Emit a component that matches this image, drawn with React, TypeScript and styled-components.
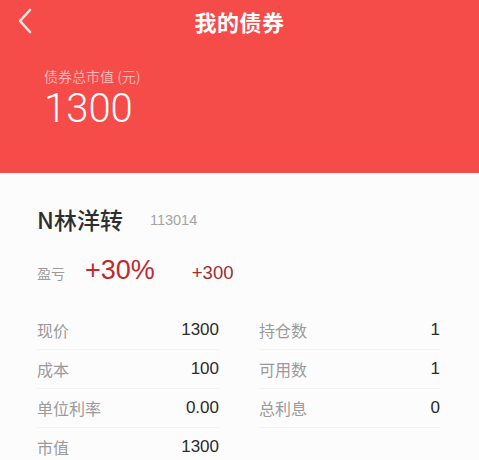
import styled, { createGlobalStyle } from 'styled-components'

const GlobalStyle = createGlobalStyle`
  html, body {
    margin: 0;
    padding: 0;
    background: #fdfcfd;
  }
  body {
    font-family: "Liberation Sans", "Noto Sans CJK SC", sans-serif;
  }
`

const Page = styled.div`
  width: 479px;
  min-height: 460px;
  overflow: hidden;
  background: #fdfcfd;
`

const Header = styled.header`
  height: 173px;
  background: #f54c4a;
  color: #fff;
`

const NavBar = styled.div`
  position: relative;
  height: 42px;
  display: flex;
  align-items: center;
  justify-content: center;
`

const BackButton = styled.button`
  position: absolute;
  left: 10px;
  top: 3px;
  width: 30px;
  height: 36px;
  padding: 0;
  border: none;
  background: none;
  display: flex;
  align-items: center;
  justify-content: center;
  cursor: pointer;
`

const Title = styled.h1`
  margin: 0;
  font-family: "Noto Sans CJK SC", sans-serif;
  font-size: 22px;
  font-weight: 700;
  letter-spacing: 0.5px;
  color: #fff;
`

const Summary = styled.div`
  padding: 24px 0 0 44px;
`

const SummaryLabel = styled.div`
  font-family: "Noto Sans CJK SC", sans-serif;
  font-size: 14px;
  line-height: 20px;
  color: #fab4b1;
`

const SummaryValue = styled.div`
  margin-top: 1px;
  font-family: Roboto, "Liberation Sans", sans-serif;
  font-size: 40px;
  font-weight: 300;
  line-height: 44px;
  color: #fff;
`

const Body = styled.section`
  padding: 31px 39px 0 37px;
`

const NameRow = styled.div`
  display: flex;
  align-items: center;
  gap: 27px;
  height: 30px;
`

const BondName = styled.div`
  font-family: "Noto Sans CJK SC", sans-serif;
  font-size: 23px;
  font-weight: 500;
  color: #2e2e2e;
`

const BondCode = styled.div`
  font-size: 14.5px;
  color: #a3a3a3;
  padding-top: 2px;
`

const ProfitRow = styled.div`
  display: flex;
  align-items: baseline;
  margin-top: 21px;
  height: 30px;
`

const MutedLabel = styled.span`
  font-family: "Noto Sans CJK SC", sans-serif;
  font-size: 14px;
  color: #9c9c9c;
`

const ProfitValue = styled.span<{ $size: number; $gap: number; $tone: string }>`
  margin-left: ${(p) => p.$gap}px;
  font-size: ${(p) => p.$size}px;
  color: ${(p) => p.$tone};
`

const InfoGrid = styled.div`
  display: grid;
  grid-template-columns: 182px 181px;
  column-gap: 40px;
  margin-top: 26px;
`

const InfoCell = styled.div<{ $line: boolean }>`
  display: flex;
  align-items: center;
  justify-content: space-between;
  height: 38px;
  border-bottom: 1px solid ${(p) => (p.$line ? '#f3f1f3' : 'transparent')};
`

const CellLabel = styled.span`
  font-family: "Noto Sans CJK SC", sans-serif;
  font-size: 16px;
  color: #9a9a9a;
`

const CellValue = styled.span`
  font-size: 17px;
  color: #2b2b2b;
`

const rows: [string, string, string, string][] = [
  ['现价', '1300', '持仓数', '1'],
  ['成本', '100', '可用数', '1'],
  ['单位利率', '0.00', '总利息', '0'],
  ['市值', '1300', '', ''],
]

function BackIcon() {
  return (
    <svg width="16" height="26" viewBox="0 0 16 26">
      <polyline
        points="13,2 3,13 13,24"
        fill="none"
        stroke="#fde6e4"
        strokeWidth="2.6"
        strokeLinecap="round"
        strokeLinejoin="round"
      />
    </svg>
  )
}

function App() {
  return (
    <Page>
      <GlobalStyle />
      <Header>
        <NavBar>
          <BackButton aria-label="返回">
            <BackIcon />
          </BackButton>
          <Title>我的债券</Title>
        </NavBar>
        <Summary>
          <SummaryLabel>债券总市值 (元)</SummaryLabel>
          <SummaryValue>1300</SummaryValue>
        </Summary>
      </Header>

      <Body>
        <NameRow>
          <BondName>N林洋转</BondName>
          <BondCode>113014</BondCode>
        </NameRow>

        <ProfitRow>
          <MutedLabel>盈亏</MutedLabel>
          <ProfitValue $size={27} $gap={20} $tone="#bd2a2f">+30%</ProfitValue>
          <ProfitValue $size={18.5} $gap={37} $tone="#9e2d34">+300</ProfitValue>
        </ProfitRow>

        <InfoGrid>
          {rows.map(([l1, v1, l2, v2], i) => {
            const line = i < rows.length - 1
            return [
              <InfoCell key={`a${i}`} $line={line}>
                <CellLabel>{l1}</CellLabel>
                <CellValue>{v1}</CellValue>
              </InfoCell>,
              <InfoCell key={`b${i}`} $line={line && l2 !== ''}>
                <CellLabel>{l2}</CellLabel>
                <CellValue>{v2}</CellValue>
              </InfoCell>,
            ]
          })}
        </InfoGrid>
      </Body>
    </Page>
  )
}

export default App
